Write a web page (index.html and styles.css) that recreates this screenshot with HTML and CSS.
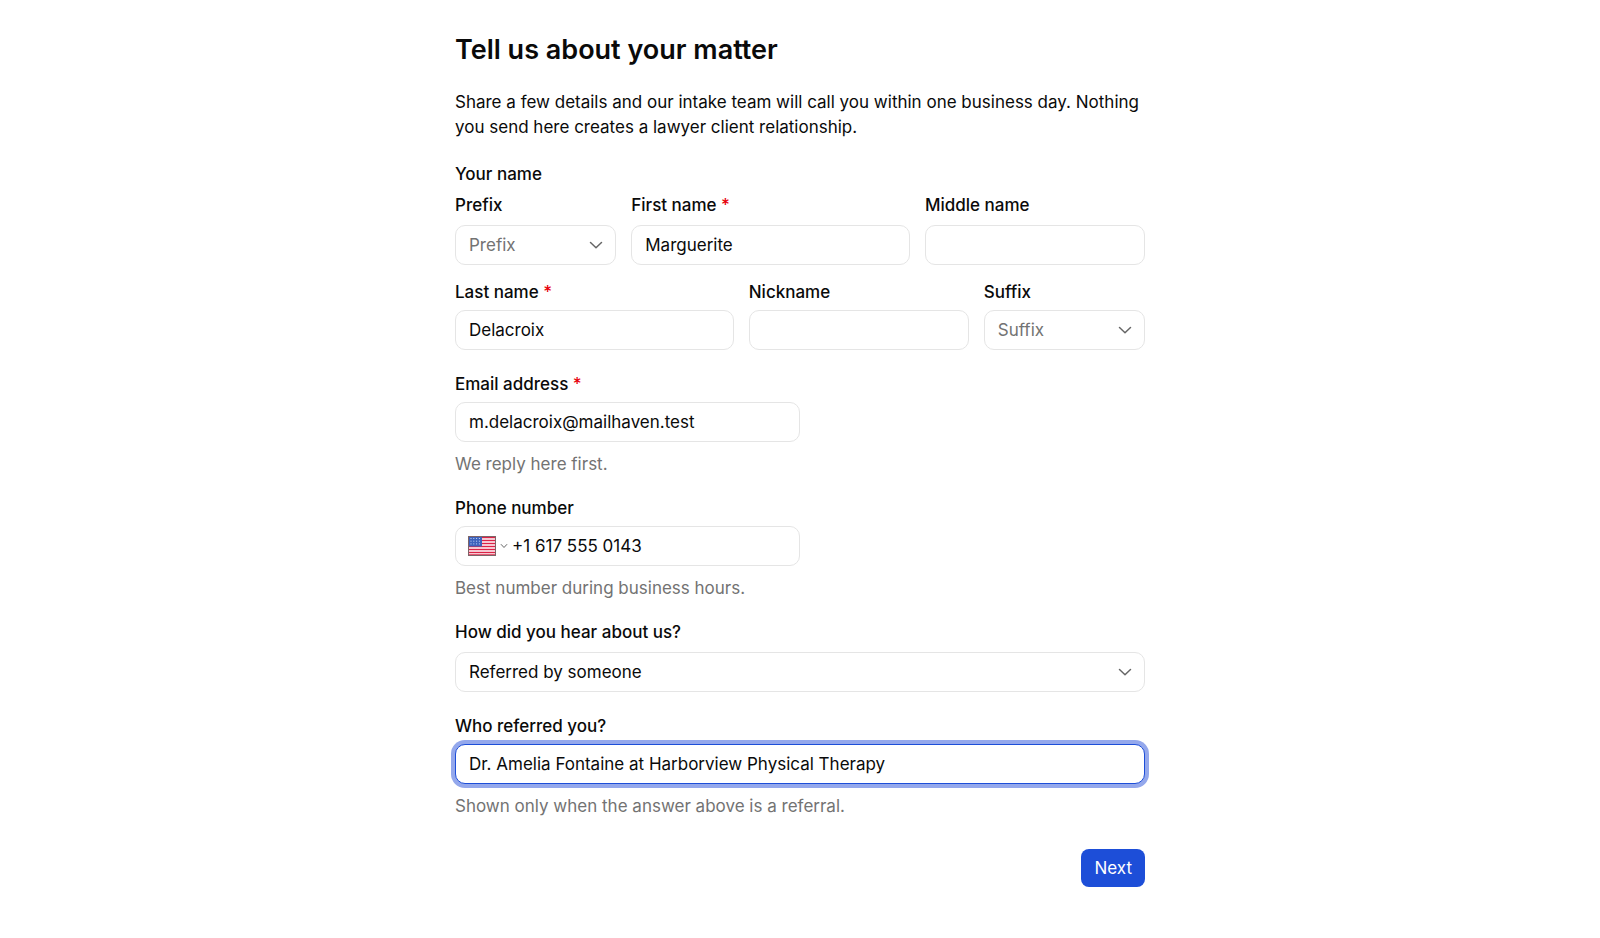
FILE: index.html
```html
<!DOCTYPE html>
<html lang="en">
  <head>
    <meta charset="utf-8">
    <meta name="viewport" content="width=device-width, initial-scale=1">
    <title>Tell us about your matter</title>
    <link rel="stylesheet" href="styles.css">
  </head>
  <body>
    <form class="intake-form">
      <h1 class="title">Tell us about your matter</h1>
      <p class="intro">Share a few details and our intake team will call you within one business day. Nothing you send here creates a lawyer client relationship.</p>

      <fieldset class="name-group">
        <legend class="name-legend">Your name</legend>

        <div class="name-grid">
          <div class="field field-loose span-3">
            <label for="prefix">Prefix</label>
            <div class="select-wrap">
              <select id="prefix" class="control placeholder">
                <option>Prefix</option>
                <option>Ms.</option>
                <option>Mr.</option>
                <option>Dr.</option>
              </select>
              <svg class="chevron" viewBox="0 0 14 14" aria-hidden="true"><path d="M1.5 4.5 7 9.7l5.5-5.2"/></svg>
            </div>
          </div>
          <div class="field field-loose span-5">
            <label for="first-name">First name <span class="required">*</span></label>
            <input id="first-name" class="control" type="text" value="Marguerite" required>
          </div>
          <div class="field field-loose span-4">
            <label for="middle-name">Middle name</label>
            <input id="middle-name" class="control" type="text">
          </div>

          <div class="field span-5">
            <label for="last-name">Last name <span class="required">*</span></label>
            <input id="last-name" class="control" type="text" value="Delacroix" required>
          </div>
          <div class="field span-4">
            <label for="nickname">Nickname</label>
            <input id="nickname" class="control" type="text">
          </div>
          <div class="field span-3">
            <label for="suffix">Suffix</label>
            <div class="select-wrap">
              <select id="suffix" class="control placeholder">
                <option>Suffix</option>
                <option>Jr.</option>
                <option>Sr.</option>
              </select>
              <svg class="chevron" viewBox="0 0 14 14" aria-hidden="true"><path d="M1.5 4.5 7 9.7l5.5-5.2"/></svg>
            </div>
          </div>
        </div>
      </fieldset>

      <div class="field field-half">
        <label for="email">Email address <span class="required">*</span></label>
        <input id="email" class="control" type="email" value="m.delacroix@mailhaven.test" aria-describedby="email-help" required>
        <p class="help" id="email-help">We reply here first.</p>
      </div>

      <div class="field field-half">
        <label for="phone">Phone number</label>
        <div class="control phone-control">
          <button class="country-button" type="button" aria-label="Country: United States">
            <svg class="flag" viewBox="0 0 28 20" aria-hidden="true">
              <rect width="28" height="20" fill="#fff"/>
              <path d="M0 1.5h28M0 4.5h28M0 7.5h28M0 10.5h28M0 13.5h28M0 16.5h28M0 19h28" stroke="#dc2347" stroke-width="1.7"/>
              <rect width="14" height="10.5" fill="#3c62bd"/>
              <path d="M2.5 2.5h10M2.5 5.2h10M2.5 7.9h10" stroke="#c9d6f5" stroke-dasharray="1 1.8"/>
              <rect x=".5" y=".5" width="27" height="19" fill="none" stroke="#7d6468"/>
            </svg>
            <svg class="small-chevron" viewBox="0 0 8 8" aria-hidden="true"><path d="m1.2 2.5 2.8 3 2.8-3"/></svg>
          </button>
          <input id="phone" class="phone-input" type="tel" value="+1 617 555 0143" aria-describedby="phone-help">
        </div>
        <p class="help" id="phone-help">Best number during business hours.</p>
      </div>

      <div class="field field-loose">
        <label for="source">How did you hear about us?</label>
        <div class="select-wrap">
          <select id="source" class="control">
            <option>Referred by someone</option>
            <option>Web search</option>
          </select>
          <svg class="chevron" viewBox="0 0 14 14" aria-hidden="true"><path d="M1.5 4.5 7 9.7l5.5-5.2"/></svg>
        </div>
      </div>

      <div class="field">
        <label for="referrer">Who referred you?</label>
        <input id="referrer" class="control active" type="text" value="Dr. Amelia Fontaine at Harborview Physical Therapy" aria-describedby="referrer-help">
        <p class="help" id="referrer-help">Shown only when the answer above is a referral.</p>
      </div>

      <div class="actions">
        <button class="next-button" type="submit">Next</button>
      </div>
    </form>
  </body>
</html>
```
FILE: styles.css
```css
* {
  box-sizing: border-box;
}
body {
  margin: 0;
  background-color: white;
  color: #0a0a0a;
  font-family: Inter, "Liberation Sans", sans-serif;
  font-size: 17px;
  line-height: 20px;
}
input,
select,
button {
  font: inherit;
  color: inherit;
}
.intake-form {
  display: flex;
  flex-direction: column;
  gap: 24px;
  max-width: 730px;
  margin: 0 auto;
  padding: 34px 20px;
}
.title {
  margin: 0;
  font-size: 27px;
  font-weight: 600;
  line-height: 32px;
}
.intro {
  margin: 0;
  line-height: 25px;
}
.name-group {
  min-width: 0;
  margin: 0;
  padding: 0;
  border: 0;
}
.name-legend {
  margin-bottom: 11px;
  padding: 0;
  font-weight: 500;
}
.name-grid {
  display: grid;
  grid-template-columns: repeat(12, 1fr);
  gap: 17px 15px;
}
.span-3 {
  grid-column: span 3;
}
.span-4 {
  grid-column: span 4;
}
.span-5 {
  grid-column: span 5;
}
.field {
  display: flex;
  flex-direction: column;
  gap: 8px;
  min-width: 0;
}
.field-loose {
  gap: 10px;
}
.field-half {
  width: 50%;
}
label {
  font-weight: 500;
}
.required {
  color: #e7000b;
}
.control {
  width: 100%;
  height: 40px;
  padding: 0 13px;
  border: 1px solid #e5e5e5;
  border-radius: 10px;
  background-color: white;
}
.control:focus,
.control.active {
  border-color: #1d4ed8;
  outline: none;
  box-shadow: 0 0 0 4px #94a8ec;
}
.select-wrap {
  display: grid;
  align-items: center;
}
.select-wrap .control {
  grid-area: 1 / 1;
  appearance: none;
}
.placeholder {
  color: #737373;
}
.chevron {
  grid-area: 1 / 1;
  justify-self: end;
  width: 14px;
  height: 14px;
  margin-right: 13px;
  pointer-events: none;
}
.chevron path,
.small-chevron path {
  fill: none;
  stroke: #666;
  stroke-width: 1.5;
  stroke-linecap: round;
  stroke-linejoin: round;
}
.small-chevron path {
  stroke-width: 1;
}
.help {
  margin: 4px 0 0;
  color: #737373;
}
.phone-control {
  display: flex;
  align-items: center;
  gap: 4px;
  padding-left: 12px;
}
.country-button {
  display: flex;
  align-items: center;
  gap: 4px;
  padding: 0;
  border: 0;
  background-color: transparent;
  cursor: pointer;
}
.flag {
  width: 28px;
  height: 20px;
}
.small-chevron {
  width: 8px;
  height: 8px;
}
.phone-input {
  flex: 1;
  min-width: 0;
  padding: 0;
  border: 0;
  outline: none;
  background-color: transparent;
}
.actions {
  display: flex;
  justify-content: flex-end;
  margin-top: 9px;
}
.next-button {
  height: 38px;
  padding: 0 13px;
  border: 0;
  border-radius: 8px;
  background-color: #1d4ed8;
  color: white;
  cursor: pointer;
}
```
